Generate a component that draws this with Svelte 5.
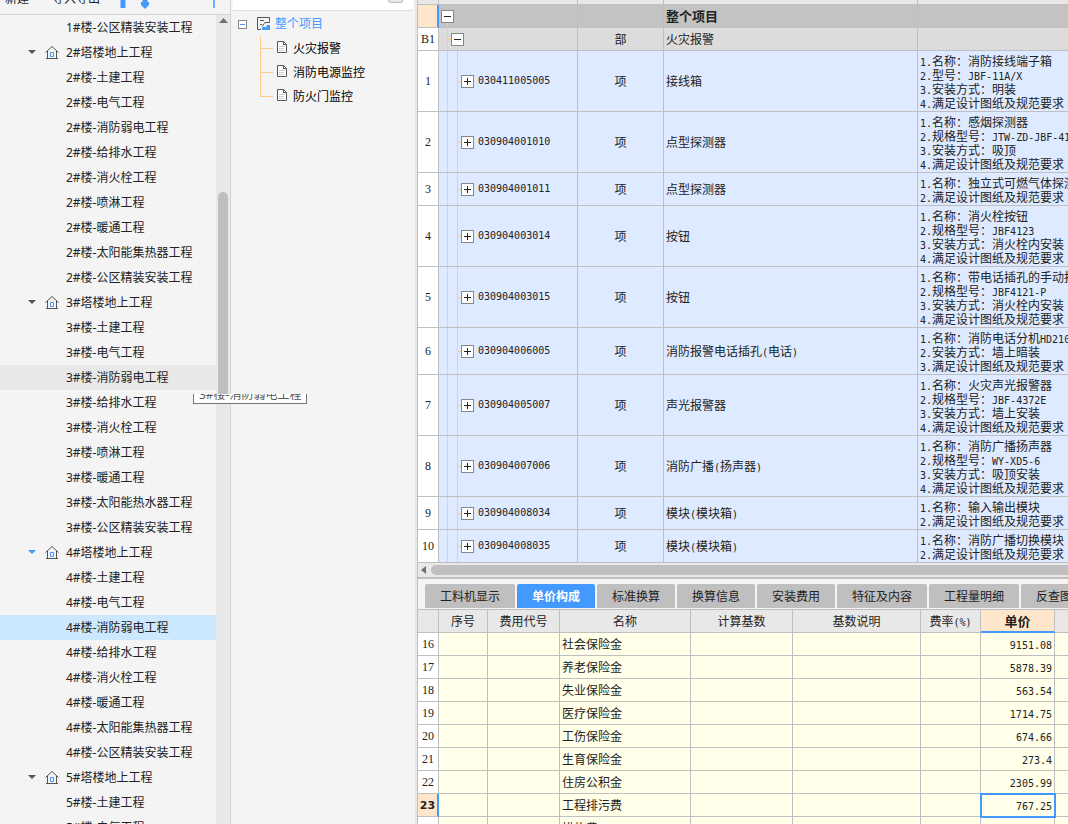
<script>
  let selected = $state('4#楼-消防弱电工程');
  let activeTab = $state('单价构成');
  const hovered = '3#楼-消防弱电工程';

  const tree = [
    { name: '1#楼-公区精装安装工程' },
    { name: '2#塔楼地上工程', group: true },
    { name: '2#楼-土建工程' },
    { name: '2#楼-电气工程' },
    { name: '2#楼-消防弱电工程' },
    { name: '2#楼-给排水工程' },
    { name: '2#楼-消火栓工程' },
    { name: '2#楼-喷淋工程' },
    { name: '2#楼-暖通工程' },
    { name: '2#楼-太阳能集热器工程' },
    { name: '2#楼-公区精装安装工程' },
    { name: '3#塔楼地上工程', group: true },
    { name: '3#楼-土建工程' },
    { name: '3#楼-电气工程' },
    { name: '3#楼-消防弱电工程' },
    { name: '3#楼-给排水工程' },
    { name: '3#楼-消火栓工程' },
    { name: '3#楼-喷淋工程' },
    { name: '3#楼-暖通工程' },
    { name: '3#楼-太阳能热水器工程' },
    { name: '3#楼-公区精装安装工程' },
    { name: '4#塔楼地上工程', group: true, current: true },
    { name: '4#楼-土建工程' },
    { name: '4#楼-电气工程' },
    { name: '4#楼-消防弱电工程' },
    { name: '4#楼-给排水工程' },
    { name: '4#楼-消火栓工程' },
    { name: '4#楼-暖通工程' },
    { name: '4#楼-太阳能集热器工程' },
    { name: '4#楼-公区精装安装工程' },
    { name: '5#塔楼地上工程', group: true },
    { name: '5#楼-土建工程' },
    { name: '5#楼-电气工程' }
  ];

  const sections = ['火灾报警', '消防电源监控', '防火门监控'];

  const last = '满足设计图纸及规范要求';
  const items = [
    { code: '030411005005', name: '接线箱', spec: ['名称：消防接线端子箱', '型号：JBF-11A/X', '安装方式：明装', last] },
    { code: '030904001010', name: '点型探测器', spec: ['名称：感烟探测器', '规格型号：JTW-ZD-JBF-4110', '安装方式：吸顶', last] },
    { code: '030904001011', name: '点型探测器', spec: ['名称：独立式可燃气体探测器', last] },
    { code: '030904003014', name: '按钮', spec: ['名称：消火栓按钮', '规格型号：JBF4123', '安装方式：消火栓内安装', last] },
    { code: '030904003015', name: '按钮', spec: ['名称：带电话插孔的手动报警按钮', '规格型号：JBF4121-P', '安装方式：消火栓内安装', last] },
    { code: '030904006005', name: '消防报警电话插孔(电话)', spec: ['名称：消防电话分机HD210', '安装方式：墙上暗装', last] },
    { code: '030904005007', name: '声光报警器', spec: ['名称：火灾声光报警器', '规格型号：JBF-4372E', '安装方式：墙上安装', last] },
    { code: '030904007006', name: '消防广播(扬声器)', spec: ['名称：消防广播扬声器', '规格型号：WY-XD5-6', '安装方式：吸顶安装', last] },
    { code: '030904008034', name: '模块(模块箱)', spec: ['名称：输入输出模块', last] },
    { code: '030904008035', name: '模块(模块箱)', spec: ['名称：消防广播切换模块', last] }
  ];

  const tabs = ['工料机显示', '单价构成', '标准换算', '换算信息', '安装费用', '特征及内容', '工程量明细', '反查图形工程量'];

  const fees = [
    { no: 16, name: '社会保险金', price: '9151.08' },
    { no: 17, name: '养老保险金', price: '5878.39' },
    { no: 18, name: '失业保险金', price: '563.54' },
    { no: 19, name: '医疗保险金', price: '1714.75' },
    { no: 20, name: '工伤保险金', price: '674.66' },
    { no: 21, name: '生育保险金', price: '273.4' },
    { no: 22, name: '住房公积金', price: '2305.99' },
    { no: 23, name: '工程排污费', price: '767.25' },
    { no: 24, name: '措施费', price: '' }
  ];
  let activeFee = $state(23);

  // splits a string into runs of half-width and full-width characters
  function runs(text) {
    return text.split(/([\x20-\x7e]+)/).filter(Boolean);
  }
</script>

{#snippet mixed(text)}
  {#each runs(text) as run}{#if /^[\x20-\x7e]/.test(run)}<span class="half">{run}</span>{:else}{run}{/if}{/each}
{/snippet}

{#snippet expander(open)}
  <button class="expander" aria-label={open ? '折叠' : '展开'}>
    <svg width="11" height="11" viewBox="0 0 11 11" stroke="#222" shape-rendering="crispEdges">
      <path d={open ? 'M2 5.5h7' : 'M2 5.5h7M5.5 2v7'} />
    </svg>
  </button>
{/snippet}

<div class="app">
  <aside class="projects">
    <div class="toolbar">
      <button>新建</button>
      <button>导入导出</button>
      <button class="icon" aria-label="上移">
        <svg width="8" height="14" viewBox="0 0 8 14"><path d="M4 0l4 5H6.500v8h-5V5H0z" fill="#4499ff" /></svg>
      </button>
      <button class="icon" aria-label="下移">
        <svg width="8" height="14" viewBox="0 0 8 14"><path d="M4 14l4-4V7H6.500V0h-5v7H0v3z" fill="#4499ff" /></svg>
      </button>
      <button class="icon end" aria-label="收起">
        <svg width="2" height="14" viewBox="0 0 2 14"><path d="M0 0h2v13H0z" fill="#6aaeff" /></svg>
      </button>
    </div>
    <div class="tree-wrap">
      <ul class="tree">
        {#each tree as node}
          <li>
            <button
              class="node"
              class:group={node.group}
              class:hovered={node.name === hovered}
              class:selected={node.name === selected}
              onclick={() => (selected = node.name)}
            >
              {#if node.group}
                <svg class="caret" class:current={node.current} width="8" height="5" viewBox="0 0 8 5"><path d="M0 0h8L4 4z" /></svg>
                <svg class="house" width="14" height="15" viewBox="0 0 14 15" fill="none">
                  <path d="M.5 7.500L7 1.500l6.500 6M2.500 6v7.500M11.500 6v7.500M1 13.500h12" stroke="#555" />
                  <path d="M5.500 7.500h3v4h-3z" stroke="#4499ff" />
                </svg>
              {/if}
              {node.name}
            </button>
          </li>
        {/each}
      </ul>
      <div class="vscroll">
        <svg width="9" height="5" viewBox="0 0 9 5"><path d="M0 5L4.500 0 9 5z" fill="#707078" /></svg>
        <div class="thumb"></div>
      </div>
    </div>
    <div class="tip"><span>{hovered}</span></div>
  </aside>

  <nav class="sections">
    <div class="sections-head"><span class="grip"></span></div>
    <div class="root">
      <button class="collapse" aria-label="折叠"></button>
      <svg width="14" height="14" viewBox="0 0 14 14" fill="none">
        <path d="M4 12.500H.5V.5h12v4M3 3.500h4M3 7.500h2" stroke="#555" />
        <path d="M5 9.500l3-4h5" stroke="#555" />
        <path d="M5 13v-2.500l2-1 2 1 1-2.500h3v5z" fill="#4499ff" />
      </svg>
      <a href="#root">整个项目</a>
    </div>
    <ul>
      {#each sections as section}
        <li>
          <svg width="11" height="14" viewBox="0 0 11 14">
            <path d="M.5.5h6l3 3v8h-9z" fill="#fff" stroke="#555" />
            <path d="M6.500.5v3h3" fill="none" stroke="#555" />
            <path d="M2 5.500h5M2 7.500h5M2 9.500h5" stroke="#ccc" />
          </svg>
          <a href="#section">{section}</a>
        </li>
      {/each}
    </ul>
  </nav>

  <main>
    <table class="bill">
      <colgroup><col class="c-no" /><col class="c-code" /><col class="c-unit" /><col class="c-title" /><col /></colgroup>
      <tbody>
        <tr class="sliver"><td></td><td></td><td></td><td></td><td></td></tr>
        <tr class="whole">
          <td class="no active"></td>
          <td class="code">{@render expander(true)}</td>
          <td></td>
          <td>整个项目</td>
          <td></td>
        </tr>
        <tr class="part">
          <td class="no">B1</td>
          <td class="code">{@render expander(true)}</td>
          <td class="unit">部</td>
          <td>火灾报警</td>
          <td></td>
        </tr>
        {#each items as item, i}
          <tr class="item">
            <td class="no">{i + 1}</td>
            <td class="code"><div>{@render expander(false)}<span class="half">{item.code}</span></div></td>
            <td class="unit">项</td>
            <td>{@render mixed(item.name)}</td>
            <td class="spec">
              {#each item.spec as line, n}
                <div>{@render mixed(`${n + 1}.${line}`)}</div>
              {/each}
            </td>
          </tr>
        {/each}
      </tbody>
    </table>
    <div class="hscroll">
      <svg width="5" height="8" viewBox="0 0 5 8"><path d="M5 0v8L0 4z" fill="#707078" /></svg>
      <div class="thumb"></div>
    </div>

    <div class="tabs" role="tablist">
      {#each tabs as tab}
        <button role="tab" aria-selected={tab === activeTab} class:on={tab === activeTab} onclick={() => (activeTab = tab)}>{tab}</button>
      {/each}
    </div>

    <table class="fees">
      <colgroup>
        <col class="c-no" /><col class="c-seq" /><col class="c-key" /><col class="c-name" /><col class="c-base" />
        <col class="c-note" /><col class="c-rate" /><col class="c-price" /><col />
      </colgroup>
      <thead>
        <tr>
          <th></th>
          <th>序号</th>
          <th>费用代号</th>
          <th>名称</th>
          <th>计算基数</th>
          <th>基数说明</th>
          <th>{@render mixed('费率(%)')}</th>
          <th class="sorted">单价</th>
          <th></th>
        </tr>
      </thead>
      <tbody>
        {#each fees as fee}
          <tr class:current={fee.no === activeFee} onclick={() => (activeFee = fee.no)}>
            <td class="no" class:active={fee.no === activeFee}>{fee.no}</td>
            <td></td>
            <td></td>
            <td>{fee.name}</td>
            <td></td>
            <td></td>
            <td></td>
            <td class="price"><span class="half">{fee.price}</span></td>
            <td></td>
          </tr>
        {/each}
      </tbody>
    </table>
  </main>
</div>

<style>
  :global(body) {
    overflow: hidden;
  }

  .app {
    display: grid;
    grid-template-columns: 231px 186px minmax(0, 1fr);
    height: 100vh;
    overflow: hidden;
    background: #f4f4f4;
    color: #222;
    font: 12px/14px 'Noto Sans', 'Noto Sans CJK SC', sans-serif;
  }

  button {
    margin: 0;
    padding: 0;
    border: none;
    background: none;
    color: inherit;
    font: inherit;
  }

  ul {
    margin: 0;
    padding: 0;
    list-style: none;
  }

  a {
    color: inherit;
    text-decoration: none;
  }

  svg {
    display: block;
    flex: none;
  }

  /* project tree */
  .projects {
    position: relative;
    display: flex;
    flex-direction: column;
    min-height: 0;
    box-sizing: border-box;
    border-right: 1px solid #d4d4d4;
  }

  .toolbar {
    display: flex;
    align-items: flex-end;
    flex: none;
    height: 14px;
    padding: 0 15px 0 5px;
    overflow: hidden;
    border-bottom: 1px solid #d4d4d4;
  }

  .toolbar button {
    height: 30px;
    margin-right: 23px;
  }

  .toolbar .icon {
    height: 24px;
    margin: 0 18px 0 -4px;
  }

  .toolbar .icon + .icon {
    margin: 0 0 0 -4px;
  }

  .toolbar .icon.end {
    margin: 0 0 0 auto;
  }

  .tree-wrap {
    display: flex;
    flex: 1;
    min-height: 0;
    overflow: hidden;
  }

  .tree {
    flex: 1;
  }

  .node {
    display: flex;
    align-items: center;
    width: 100%;
    height: 25px;
    padding-left: 66px;
    white-space: nowrap;
  }

  .node.group {
    padding-left: 28px;
  }

  .node.hovered {
    background: #e8e8e8;
  }

  .node.selected {
    background: #cce8ff;
  }

  .caret {
    margin-right: 9px;
    fill: #555;
  }

  .caret.current {
    fill: #4499ff;
  }

  .house {
    margin-right: 7px;
  }

  .vscroll {
    display: flex;
    flex-direction: column;
    align-items: center;
    width: 14px;
    padding-top: 3px;
    background: #e8e8e8;
  }

  .vscroll .thumb {
    width: 10px;
    height: 210px;
    margin-top: 169px;
    border-radius: 5px;
    background: #bfbfbf;
  }

  .tip {
    position: absolute;
    z-index: 2;
    left: 193px;
    top: 394px;
    display: flex;
    align-items: flex-end;
    height: 9px;
    padding: 0 5px;
    overflow: hidden;
    border: 1px solid #767676;
    border-top: none;
    background: #fff;
    color: #575757;
    white-space: nowrap;
  }

  .tip span {
    line-height: 16px;
  }

  /* sections */
  .sections {
    border-right: 2px solid #e8e8e8;
    color: #000;
  }

  .sections-head {
    display: flex;
    justify-content: flex-end;
    height: 10px;
    margin: 0 2px;
    padding-right: 10px;
    border-bottom: 1px solid #dcdcdc;
    background: #fff;
  }

  .grip {
    width: 13px;
    height: 2px;
    border: 1px solid #bbb;
    border-top: none;
    border-radius: 0 0 4px 4px;
    background: #e8e8e8;
  }

  .root {
    display: flex;
    align-items: center;
    height: 24px;
    padding: 1px 0 0 7px;
    color: #4499ff;
  }

  .root svg {
    margin: 0 4px 0 10px;
  }

  .collapse {
    width: 9px;
    height: 9px;
    border: 1px solid #888;
    background: linear-gradient(#4499ff, #4499ff) center / 5px 1px no-repeat #fff;
  }

  .sections li {
    display: flex;
    align-items: center;
    height: 24px;
    margin-left: 29px;
    background:
      linear-gradient(#ffcc88, #ffcc88) 0 0 / 1px 100% no-repeat,
      linear-gradient(#ffcc88, #ffcc88) 0 12px / 13px 1px no-repeat;
  }

  .sections li:last-child {
    background-size: 1px 12px, 13px 1px;
  }

  .sections li svg {
    margin: 0 5px 0 17px;
  }

  .sections li a {
    padding-top: 1px;
  }

  /* tables */
  main {
    min-width: 0;
    overflow: hidden;
    border-left: 1px solid #bfbfbf;
  }

  table {
    width: 100%;
    table-layout: fixed;
    border-spacing: 0;
    font-family: 'Liberation Serif', 'Noto Sans CJK SC', serif;
  }

  td,
  th {
    box-sizing: border-box;
    padding: 2px 2px 0;
    overflow: hidden;
    border: solid #bfbfbf;
    border-width: 0 1px 1px 0;
    white-space: nowrap;
    text-align: left;
  }

  td:last-child,
  th:last-child {
    border-right: none;
  }

  .half {
    font-family: 'DejaVu Sans Mono', monospace;
    font-size: 10px;
  }

  .c-no {
    width: 21px;
  }

  .c-code {
    width: 139px;
  }

  .c-unit {
    width: 86px;
  }

  .c-title {
    width: 254px;
  }

  .no {
    padding: 0;
    background: #fff;
    text-align: center;
  }

  .no.active {
    border-right: 2px solid #4499ff;
    background: #ffe6ca;
    font: bold 11px 'DejaVu Sans', sans-serif;
  }

  .unit {
    text-align: center;
  }

  .sliver td {
    height: 5px;
    padding: 0;
    background: #e8e8e8;
  }

  .whole td {
    height: 23px;
    background-color: #c3c3c3;
    font-size: 13px;
    font-weight: bold;
  }

  .whole .active {
    background-color: #ffe6ca;
  }

  .whole .code {
    padding-top: 0;
    background-image: linear-gradient(#ffcc88, #ffcc88);
    background-position: 8px 100%;
    background-size: 1px 5px;
    background-repeat: no-repeat;
  }

  .part td {
    height: 23px;
    background-color: #dcdcdc;
  }

  .part .no {
    background: #fff;
  }

  .part .code {
    padding: 0 0 0 12px;
    background-image: linear-gradient(#ffcc88, #ffcc88), linear-gradient(#ffcc88, #ffcc88), linear-gradient(#ffcc88, #ffcc88);
    background-position: 8px 0, 8px 50%, 18px 100%;
    background-size: 1px 100%, 4px 1px, 1px 5px;
    background-repeat: no-repeat;
  }

  .item td {
    background-color: #deeaff;
  }

  .item .no {
    background: #fff;
  }

  .item .code {
    padding: 0 0 0 22px;
    background-image: linear-gradient(#ffcc88, #ffcc88), linear-gradient(#ffcc88, #ffcc88), linear-gradient(#ffcc88, #ffcc88);
    background-position: 8px 0, 18px 0, 18px 50%;
    background-size: 1px 100%, 1px 100%, 4px 1px;
    background-repeat: no-repeat;
  }

  .code div {
    display: flex;
    align-items: center;
    gap: 4px;
  }

  .expander {
    display: block;
    width: 13px;
    height: 13px;
    border: 1px solid #888;
    background: #fff;
  }

  .item .spec {
    padding: 4px 0 0 2px;
  }

  .spec div {
    height: 14px;
  }

  .hscroll {
    display: flex;
    align-items: center;
    gap: 5px;
    height: 14px;
    padding-left: 3px;
    border-bottom: 2px solid #bfbfbf;
    background: #e8e8e8;
  }

  .hscroll .thumb {
    flex: 1;
    height: 10px;
    border-radius: 5px 0 0 5px;
    background: #bfbfbf;
  }

  .tabs {
    display: flex;
    gap: 2px;
    padding: 5px 0 1px 7px;
    overflow: hidden;
    border-bottom: 1px solid #bfbfbf;
  }

  .tabs button {
    flex: none;
    height: 24px;
    padding: 2px 15px 0;
    border-radius: 2px 2px 0 0;
    background: #bfbfbf;
  }

  .tabs .on {
    background: #4499ff;
    color: #fff;
    font-weight: bold;
  }

  .c-seq {
    width: 49px;
  }

  .c-key {
    width: 72px;
  }

  .c-name {
    width: 131px;
  }

  .c-base {
    width: 102px;
  }

  .c-note {
    width: 128px;
  }

  .c-rate {
    width: 60px;
  }

  .c-price {
    width: 74px;
  }

  th {
    height: 23px;
    background: #e8e8e8;
    font-weight: normal;
    text-align: center;
  }

  .sorted {
    border-bottom: 2px solid #4499ff;
    background: #ffe6ca;
    font-size: 13px;
    font-weight: bold;
  }

  .fees td {
    height: 23px;
    background: #ffffea;
  }

  .fees .no {
    background: #fff;
  }

  .fees .active {
    background: #ffe6ca;
  }

  .fees .price {
    text-align: right;
  }

  .current .price {
    outline: 2px solid #4499ff;
    outline-offset: -1px;
  }
</style>
